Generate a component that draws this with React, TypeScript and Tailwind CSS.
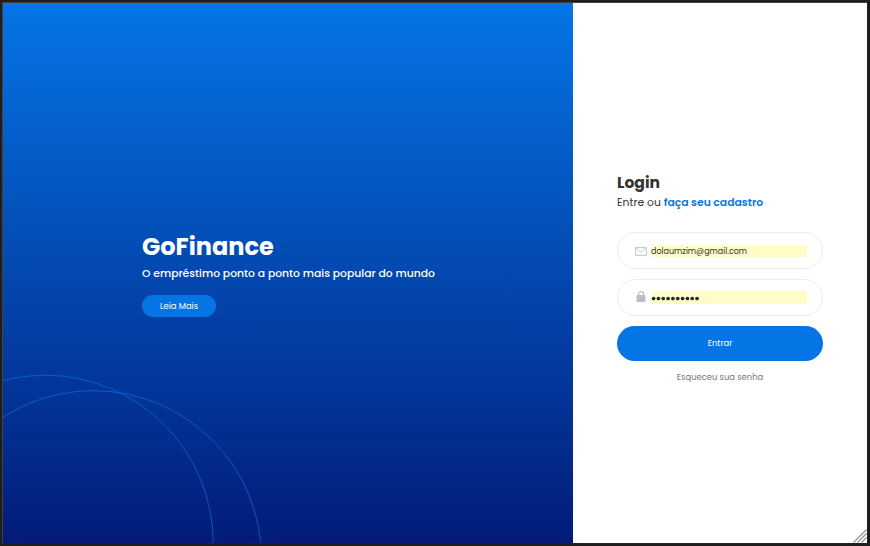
export default function App() {
  return (
    <div className="h-[546px] w-[870px] overflow-hidden border-2 border-[#1e1e1e] border-r-[#1b191d] border-b-[#201e20] bg-[#222] pr-px pb-px font-['Poppins','Inter',sans-serif]">
      <div className="flex h-[541px] w-[865px] border-t border-l border-[#45423f]">
        <section className="relative flex w-[570px] shrink-0 flex-col items-start overflow-hidden pl-[139px] [background-image:linear-gradient(to_bottom,#0575e6_0%,#02298a_84.8%,#021b79_100%)]">
          <svg className="absolute inset-0 h-full w-full" viewBox="3 3 570 540" fill="none" stroke="#0575e6" strokeOpacity=".65">
            <circle cx="45" cy="543.5" r="168.3" />
            <circle cx="93.3" cy="559" r="168.3" />
          </svg>
          <h1 className="relative mt-[226px] h-9 whitespace-nowrap text-[24px] leading-9 font-bold text-white">GoFinance</h1>
          <p className="relative mt-px h-4 whitespace-nowrap text-[10.8px] leading-4 font-medium text-white">O empréstimo ponto a ponto mais popular do mundo</p>
          <button className="relative mt-[13px] h-[22px] w-[74px] rounded-full bg-[#0575e6] text-[8.4px] leading-[22px] text-white">Leia Mais</button>
        </section>
        <main className="relative flex grow flex-col bg-white pr-[44px] pl-[44px]">
          <h2 className="mt-[168px] h-6 text-[15.6px] leading-6 font-bold text-[#333]">Login</h2>
          <p className="h-4 whitespace-nowrap text-[10.8px] leading-4 text-[#333]">Entre ou <a className="font-semibold text-[#0575e6]">faça seu cadastro</a></p>
          <label className="mt-[21px] flex h-[37px] w-[206px] items-center rounded-full border border-[#eee] pl-[16.5px]">
            <svg className="mt-px h-[9px] w-3" viewBox="0 0 12 9" fill="none" stroke="#bebebe" strokeWidth=".9">
              <path d="M.6.6h10.8v7.8H.6zM.8.8 6 5.2 11.2.8" />
            </svg>
            <span className="ml-[4.5px] h-3 w-[156px] whitespace-nowrap bg-[#fffcc8] text-[8px] leading-[14px] text-[#333]">dolaumzim@gmail.com</span>
          </label>
          <label className="mt-[10px] flex h-[37px] w-[206px] items-center rounded-full border border-[#eee] pl-[17.5px]">
            <svg className="h-[11px] w-[10px] -translate-y-px" viewBox="0 0 10 11">
              <rect x=".5" y="4" width="9" height="7" rx="1" fill="#bebebe" />
              <path d="M2.6 4.5V2.9a2.4 2.2 0 0 1 4.8 0v1.6" fill="none" stroke="#bebebe" strokeWidth="1.2" />
            </svg>
            <span className="ml-[5.5px] h-[13px] w-[156px] bg-[#fffcc8]">
              <svg className="block h-[13px] w-[60px]" viewBox="0 0 60 13" fill="#222733">
                {Array.from({ length: 10 }, (_, i) => <circle key={i} cx={2.6 + i * 4.83} cy="7.5" r="1.85" />)}
              </svg>
            </span>
          </label>
          <button className="mt-[10px] h-[35px] w-[206px] rounded-full bg-[#0575e6] text-[8.4px] text-white">Entrar</button>
          <a className="mt-[9px] w-[206px] text-center text-[8.4px] leading-[14px] text-[#777]">Esqueceu sua senha</a>
          <svg className="absolute right-0 bottom-0 size-[14px]" viewBox="0 0 14 14" stroke="#929292" strokeWidth="1.2">
            <path d="M.5 13.5l13-13M4.5 13.5l9-9M8.5 13.5l5-5" />
          </svg>
        </main>
      </div>
    </div>
  );
}
